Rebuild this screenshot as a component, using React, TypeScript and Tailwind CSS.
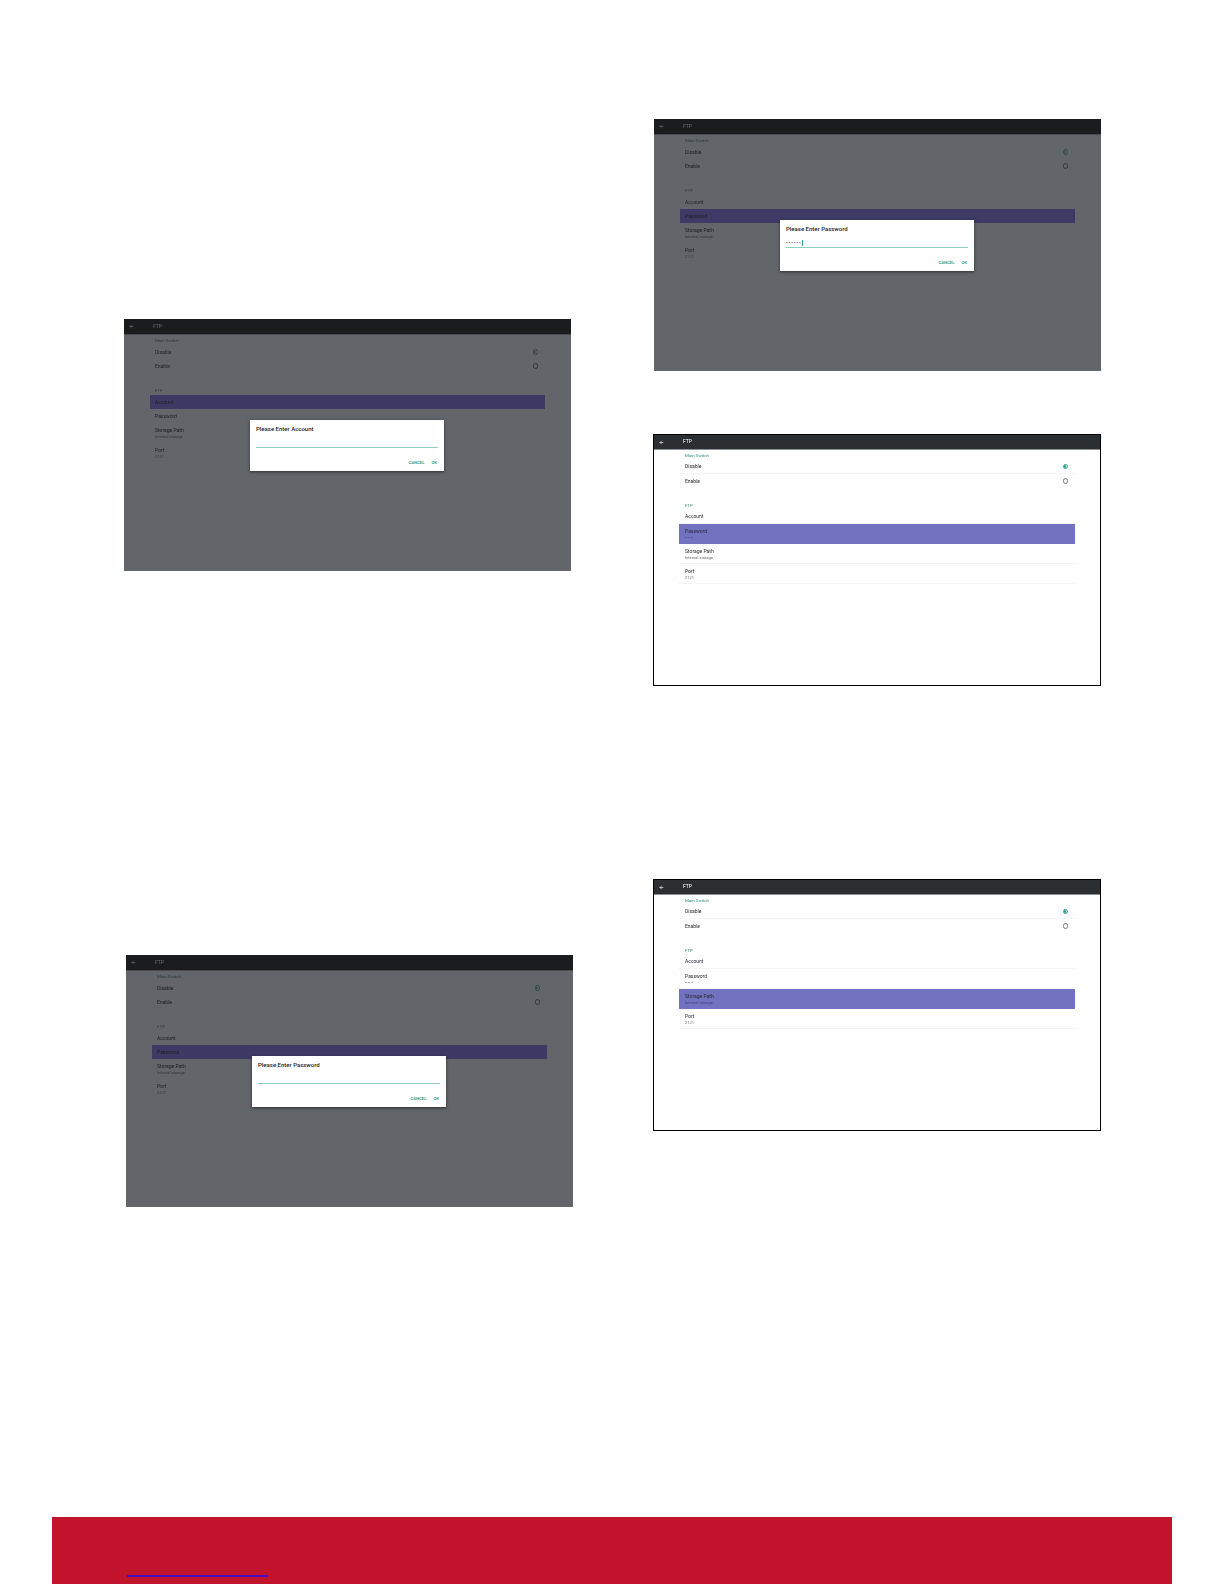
import React from 'react';
import { ArrowLeft } from 'lucide-react';

type RowProps = {
  label: string;
  sub?: string;
  selected?: boolean;
  dim?: boolean;
  line?: boolean;
};

// one row of the settings list, one or two lines of text
const Row: React.FC<RowProps> = ({ label, sub, selected, dim, line }) => {
  const bg = selected ? (dim ? 'bg-[#3d3b66]' : 'bg-[#7272c0]') : '';
  const border = line && !selected && !dim ? 'border-b border-[#f4f4f4]' : '';
  const labelColor = dim ? 'text-[#1d1e22]' : 'text-[#2b2b33]';
  const subColor = selected
    ? dim
      ? 'text-[#33324f]'
      : 'text-[#454580]'
    : dim
      ? 'text-[#35373b]'
      : 'text-[#66666c]';

  return (
    <div className={`box-border ${dim ? 'pl-[5px]' : 'pl-[6px]'} ${sub ? 'h-[20px] pt-[3.5px]' : 'h-[14px] flex items-center'} ${bg} ${border}`}>
      <div className={`text-[5px] leading-[7px] ${labelColor}`}>{label}</div>
      {sub && <div className={`text-[4px] leading-[5px] ${subColor}`}>{sub}</div>}
    </div>
  );
};

const RadioRow: React.FC<{ label: string; checked?: boolean; dim?: boolean; line?: boolean }> = ({ label, checked, dim, line }) => {
  const ring = checked
    ? dim
      ? 'border-[#34474a]'
      : 'border-[#2f9e83]'
    : dim
      ? 'border-[#35373b]'
      : 'border-[#77797c]';

  return (
    <div className={`box-border h-[14px] flex items-center justify-between ${dim ? 'pl-[5px]' : 'pl-[6px]'} pr-[7px] ${line && !dim ? 'border-b border-[#f4f4f4]' : ''}`}>
      <span className={`text-[5px] leading-[7px] ${dim ? 'text-[#1d1e22]' : 'text-[#2b2b33]'}`}>{label}</span>
      <span className={`box-border w-[5.5px] h-[5.5px] rounded-full border-[0.5px] flex items-center justify-center ${ring}`}>
        {checked && <span className={`w-[2.4px] h-[2.4px] rounded-full ${dim ? 'bg-[#34474a]' : 'bg-[#2f9e83]'}`} />}
      </span>
    </div>
  );
};

const Dialog: React.FC<{ title: string; dots?: boolean }> = ({ title, dots }) => (
  <div className="absolute left-[126px] top-[101px] w-[194px] h-[51px] bg-white shadow-[0_1px_3px_rgba(0,0,0,0.55)] px-[6px] pt-[5px] font-['Roboto',sans-serif]">
    <div className="text-[6px] leading-[8px] font-medium text-[#222226]">{title}</div>
    <div className="box-border h-[15px] border-b border-[#8fcfc0] flex items-end pb-[1px]">
      {dots && (
        <>
          <span className="text-[5px] leading-[6px] tracking-[0.9px] text-[#333]">••••••</span>
          <span className="w-[0.6px] h-[6px] bg-[#2f9e83]" />
        </>
      )}
    </div>
    <div className="flex justify-end gap-[7px] mt-[11.5px] pr-[1px] text-[4.2px] leading-[6px] font-bold text-[#3aa88e]">
      <span>CANCEL</span>
      <span>OK</span>
    </div>
  </div>
);

type ScreenProps = {
  selected: string;
  dialog?: string;
  dots?: boolean;
  className?: string;
};

// tablet screenshot of the FTP settings page
const Screen: React.FC<ScreenProps> = ({ selected, dialog, dots, className }) => {
  const dim = !!dialog;

  return (
    <div className={`relative box-border h-[252px] overflow-hidden font-['Roboto',sans-serif] ${dim ? 'w-[447px] bg-[#62656a]' : 'w-[448px] bg-white border border-black'} ${className ?? ''}`}>
      <div className="blur-[0.35px]">
        <div className={`flex items-center border-b ${dim ? 'h-[16px] bg-[#1b1c1e] border-[#4a4c50]' : 'h-[15px] bg-[#2b2f31] border-[#8a9094]'}`}>
          <div className="w-[29px] pl-[5px]">
            <ArrowLeft size={5} strokeWidth={3} className={dim ? 'text-[#6a6c70]' : 'text-white'} />
          </div>
          <span className={`text-[5px] ${dim ? 'text-[#6a6c70]' : 'text-white'}`}>FTP</span>
        </div>

        <div className={dim ? 'mx-[26px]' : 'mx-[25px]'}>
          <div className={`${dim ? 'pl-[5px] text-[#2c3a40]' : 'pl-[6px] text-[#2a9279]'} pt-[2px] text-[4.4px] leading-[8px]`}>Main Switch</div>
          <RadioRow label="Disable" checked dim={dim} line />
          <RadioRow label="Enable" dim={dim} />

          <div className={`${dim ? 'pl-[5px] text-[#35383c]' : 'pl-[6px] text-[#2a9279]'} mt-[14px] text-[4.4px] leading-[8px]`}>FTP</div>
          <Row label="Account" selected={selected === 'Account'} dim={dim} line />
          <Row label="Password" sub={dim ? undefined : '••••••'} selected={selected === 'Password'} dim={dim} line />
          <Row label="Storage Path" sub="Internal storage" selected={selected === 'Storage Path'} dim={dim} line />
          <Row label="Port" sub="2121" selected={selected === 'Port'} dim={dim} line />
        </div>
      </div>

      {dialog && <Dialog title={dialog} dots={dots} />}
    </div>
  );
};

const App: React.FC = () => {
  return (
    <div className="w-[1224px] h-[1584px] bg-white overflow-hidden flex flex-col">
      <div className="h-[1517px] flex">
        <div className="w-[654px] pt-[319px] pl-[124px]">
          <Screen selected="Account" dialog="Please Enter Account" />
          <Screen selected="Password" dialog="Please Enter Password" className="mt-[384px] ml-[2px]" />
        </div>
        <div className="pt-[119px]">
          <Screen selected="Password" dialog="Please Enter Password" dots />
          <Screen selected="Password" className="mt-[63px] -ml-[1px]" />
          <Screen selected="Storage Path" className="mt-[193px] -ml-[1px]" />
        </div>
      </div>

      {/* red footer band */}
      <div className="mx-[52px] h-[67px] bg-[#c2132d] pl-[75px] pt-[58px]">
        <div className="w-[141px] h-[1.5px] bg-[#4a0fc0]" />
      </div>
    </div>
  );
};

export default App;
